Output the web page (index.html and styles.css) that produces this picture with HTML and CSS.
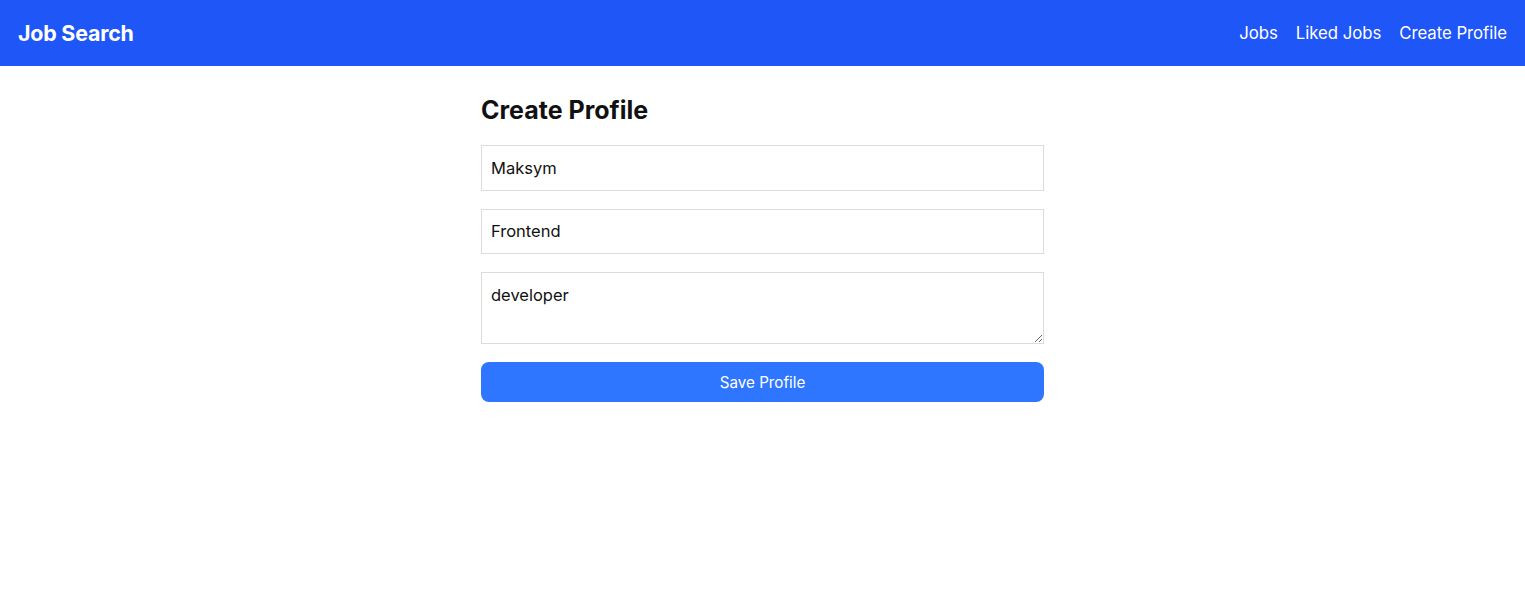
FILE: index.html
```html
<!DOCTYPE html>
<html lang="en">
<head>
<meta charset="utf-8">
<title>Job Search</title>
<link rel="stylesheet" href="styles.css">
</head>
<body>
<header class="topbar">
  <a class="brand" href="#">Job Search</a>
  <nav class="nav">
    <a href="#">Jobs</a>
    <a href="#">Liked Jobs</a>
    <a href="#">Create Profile</a>
  </nav>
</header>
<main class="page">
  <h1 class="title">Create Profile</h1>
  <form class="form">
    <input class="field" type="text" value="Maksym">
    <input class="field" type="text" value="Frontend">
    <textarea class="field area">developer</textarea>
    <button class="save" type="button">Save Profile</button>
  </form>
</main>
</body>
</html>
```

FILE: styles.css
```css
* { box-sizing: border-box; }
html, body { margin: 0; padding: 0; background: #fff; }
body { font-family: Inter, "Noto Sans", "Liberation Sans", sans-serif; color: #111; }

.topbar {
  height: 66px;
  background: #1f56f7;
  display: flex;
  align-items: center;
  justify-content: space-between;
  padding: 0 18px;
}
.brand {
  color: #fff;
  text-decoration: none;
  font-weight: 700;
  font-size: 21.4px;
  letter-spacing: -0.2px;
}
.nav { display: flex; gap: 18px; }
.nav a {
  color: #fff;
  text-decoration: none;
  font-size: 16.8px;
  letter-spacing: -0.05px;
}

.page {
  width: 563px;
  margin: 0 auto;
  padding-top: 28px;
}
.title {
  margin: 0 0 19px;
  font-size: 25px;
  line-height: 32px;
  font-weight: 700;
  letter-spacing: 0;
  color: #111;
}
.form { display: flex; flex-direction: column; gap: 18px; }
.field {
  display: block;
  width: 100%;
  height: 45.5px;
  padding: 0 9px;
  border: 1px solid #dcdcdc;
  border-radius: 0;
  font-family: inherit;
  font-size: 16.5px;
  color: #111;
  background: #fff;
  outline: none;
}
.area {
  height: 72px;
  padding: 11px 9px;
  line-height: 22px;
  resize: vertical;
}
.save {
  height: 40px;
  width: 100%;
  border: none;
  border-radius: 8px;
  background: #2e76ff;
  color: #fff;
  font-family: inherit;
  font-size: 15.2px;
  cursor: pointer;
}
```
